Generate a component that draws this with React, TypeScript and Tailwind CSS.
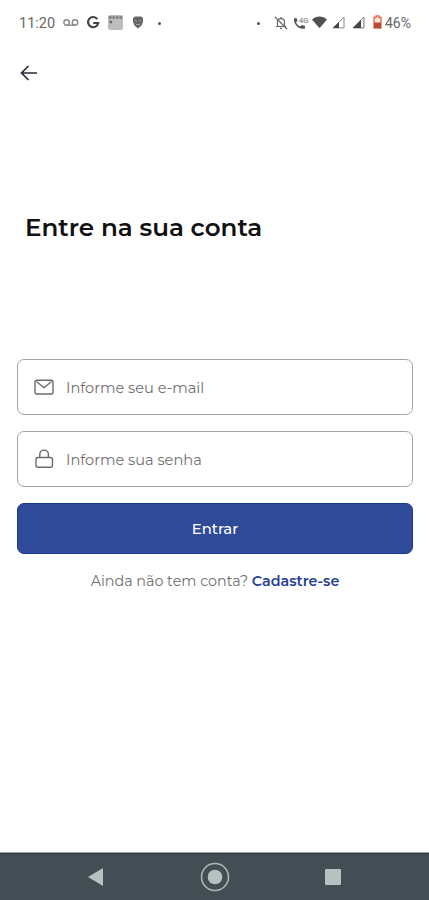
import React from "react";

function StatusBar() {
  return (
    <header className="flex h-[46px] items-center pl-[19px] text-[#666]">
      <span className="w-[44px] whitespace-nowrap pt-[2px] font-['Roboto',sans-serif] text-[14.5px] leading-4">11:20</span>
      <svg className="h-4 w-4 shrink-0" viewBox="0 0 16 16" fill="none" stroke="#888" strokeWidth="1.4">
        <circle cx="3.6" cy="7.5" r="2.7" />
        <circle cx="12" cy="7.5" r="2.7" />
        <path d="M3.6 10.2H12" />
      </svg>
      <svg className="ml-[7px] h-4 w-[14px] shrink-0" viewBox="0 0 14 16" fill="none" stroke="#444" strokeWidth="2.2">
        <path d="M11.3 4.1A5.1 5.1 0 1 0 12.2 8H7.2" />
      </svg>
      <svg className="ml-2 h-4 w-[15px] shrink-0" viewBox="0 0 15 16">
        <rect width="15" height="15" x="0" y="0" rx="2" fill="#bdbdbd" />
        <path d="M1 2.5h13" stroke="#777" strokeWidth="2.4" strokeDasharray="2.4 1.1" />
        <path d="M1.5 7h2.6" stroke="#666" strokeWidth="2.4" />
      </svg>
      <svg className="ml-[9px] h-4 w-3 shrink-0" viewBox="0 0 12 16">
        <path d="M1 3 3 1.5h6L11 3v4L9.500 10.500 6 13.500 2.500 10.500 1 7Z" fill="#666" />
        <path d="m3 5.500 2 .8M9 5.500 7 6.300M4 9.500h4" fill="none" stroke="#aaa" strokeWidth="0.9" />
      </svg>
      <i className="ml-[14px] h-[3px] w-[3px] rounded-full bg-[#555]" />
      <i className="ml-[96px] h-[3px] w-[3px] rounded-full bg-[#555]" />
      <svg className="ml-[14px] h-4 w-[14px] shrink-0" viewBox="0 0 14 16" fill="none" stroke="#666" strokeWidth="1.2">
        <path d="M2 11.500h10M3.500 11V7c0-2 1-3.400 3.500-3.700C9.500 3.600 10.500 5 10.500 7v4M7 2v1.500M6 13.300h2" />
        <path d="m1 2 12 12" />
      </svg>
      <svg className="ml-[5px] h-4 w-4 shrink-0" viewBox="0 0 16 16">
        <path d="M1 3.200 3.500 3l1 3L3 7.300c.8 2 2.200 3.300 4 4.200L9 10l3 1v2.500C6 15 .3 9.500 1 3.200Z" fill="#555" />
        <text x="6" y="8" fontSize="7.500" fontWeight="700" fill="#999" fontFamily="Roboto, sans-serif">4G</text>
      </svg>
      <svg className="ml-[3px] h-4 w-[15px] shrink-0" viewBox="0 0 15 16">
        <path d="M0 4.500C4.500 .5 10.500 .5 15 4.500L7.500 13.200Z" fill="#505050" />
      </svg>
      <svg className="ml-[5px] h-4 w-[13px] shrink-0" viewBox="0 0 13 16">
        <path d="M1 12.900 12 2v10.900Z" fill="none" stroke="#888" strokeWidth="1" />
        <path d="M1 13 7 7v6Z" fill="#444" />
      </svg>
      <svg className="ml-[7px] h-4 w-[13px] shrink-0" viewBox="0 0 13 16">
        <path d="M1 12.900 12 2v10.900Z" fill="none" stroke="#777" strokeWidth="1" />
        <path d="M1 13 9 5v8Z" fill="#444" />
      </svg>
      <svg className="ml-2 h-4 w-[9px] shrink-0" viewBox="0 0 9 16">
        <path d="M3 1h3v1.500h2V13H1V2.500h2Z" fill="#fbe6dc" stroke="#de6c4a" strokeWidth="1.300" />
        <path d="M1 7.500h7V13H1Z" fill="#b84b32" />
      </svg>
      <span className="ml-[3px] font-['Roboto',sans-serif] text-[14px] leading-4">46%</span>
    </header>
  );
}

function MailIcon() {
  return (
    <svg className="h-5 w-5" viewBox="0 0 20 20" fill="none" stroke="#6b6b6b" strokeWidth="1.400" strokeLinejoin="round">
      <rect x="1" y="3.300" width="18" height="13.700" rx="1.500" />
      <path d="m2.500 4.500 7.500 6.300 7.500-6.300" />
    </svg>
  );
}

function LockIcon() {
  return (
    <svg className="h-5 w-5" viewBox="0 0 20 20" fill="none" stroke="#6b6b6b" strokeWidth="1.400">
      <rect x="2" y="8.500" width="16.500" height="9.700" rx="2" />
      <path d="M5.800 8.500V5.400a4.300 4.300 0 0 1 8.600 0v3.100" />
    </svg>
  );
}

function Field({ icon, children }: { icon: React.ReactNode; children: React.ReactNode }) {
  return (
    <div className="flex h-14 items-center gap-3 rounded-[7px] border border-[#a3a3a3] pl-4 text-[14.6px] text-[#707070]">
      {icon}
      <span className="whitespace-nowrap pt-[3px]">{children}</span>
    </div>
  );
}

export default function App() {
  return (
    <div className="flex h-[900px] w-full flex-col overflow-hidden bg-white font-['Montserrat','Inter',sans-serif]">
      <StatusBar />
      <div className="flex h-[54px] items-center pl-[20px]">
        <svg className="h-[18px] w-[18px]" viewBox="0 0 18 18" fill="none" stroke="#292938" strokeWidth="1.700">
          <path d="M17 9H1.500M8.500 2 1.500 9l7 7" />
        </svg>
      </div>
      <h1 className="mt-[110px] h-[34px] whitespace-nowrap pl-[25px] text-[24.6px] font-semibold leading-[34px] text-[#111]">
        Entre na sua conta
      </h1>
      <main className="mt-[115px] flex flex-col gap-4 pl-[17px] pr-4">
        <Field icon={<MailIcon />}>Informe seu e-mail</Field>
        <Field icon={<LockIcon />}>Informe sua senha</Field>
        <button className="h-[51px] rounded-[7px] border border-[#173a8d] bg-[#304a9a] pt-px text-[14.8px] font-medium text-white">Entrar</button>
        <p className="whitespace-nowrap text-center text-[14.3px] leading-[22px] text-[#707070]">
          Ainda não tem conta? <a className="font-semibold text-[#263f94]">Cadastre-se</a>
        </p>
      </main>
      <nav className="mt-auto flex h-12 items-center border-t border-[#9da2a4] bg-[#434d54] pl-[88px] shadow-[inset_0_1px_0_#303a40]">
        <svg className="h-[18px] w-4" viewBox="0 0 16 18" fill="#b8c1c1"><path d="M15 0v18L0 9Z" /></svg>
        <svg className="ml-[96px] h-[30px] w-[30px]" viewBox="0 0 30 30">
          <circle cx="15" cy="15" r="13.500" fill="none" stroke="#adb6b7" strokeWidth="1.600" />
          <circle cx="15" cy="15" r="7.300" fill="#b8c1c1" />
        </svg>
        <i className="ml-[95px] h-4 w-4 rounded-[1px] bg-[#b8c1c1]" />
      </nav>
    </div>
  );
}
